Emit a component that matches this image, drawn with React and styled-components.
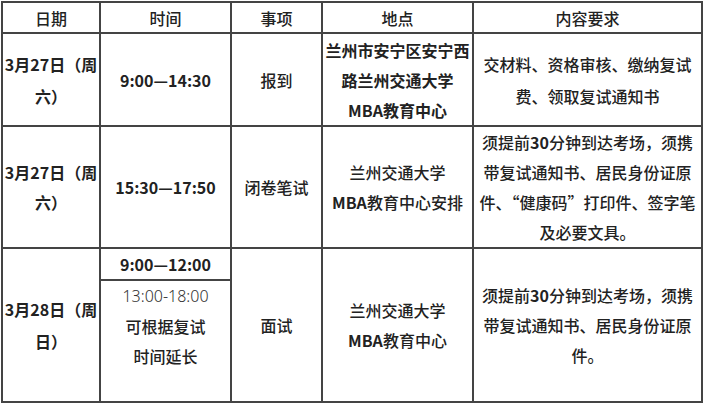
import React from "react";
import styled, { createGlobalStyle } from "styled-components";

const GlobalStyle = createGlobalStyle`
  html, body {
    margin: 0;
    padding: 0;
    background: #fff;
  }
  body {
    font-family: "Microsoft YaHei", "Noto Sans CJK SC", "Noto Sans", sans-serif;
    color: #222;
  }
`;

const Page = styled.div`
  padding: 1px 0 0 1px;
`;

const Table = styled.table`
  width: 700px;
  table-layout: fixed;
  border-collapse: collapse;
  font-size: 16px;
`;

const Row = styled.tr`
  height: ${(p) => p.$h}px;
`;

const Th = styled.th`
  border: 2px solid #444;
  padding: 0;
  font-weight: 500;
  text-align: center;
  vertical-align: middle;
  line-height: 20px;
`;

const Td = styled.td`
  border: 2px solid #444;
  padding: 0;
  text-align: center;
  vertical-align: ${(p) => (p.$top ? "top" : "middle")};
  font-weight: ${(p) => (p.$bold ? 700 : 500)};
  line-height: ${(p) => (p.$tall ? 32 : 30)}px;
  white-space: nowrap;
  overflow: hidden;
`;

const Light = styled.div`
  font-family: "Noto Sans", "Liberation Sans", sans-serif;
  font-weight: 300;
  color: #333;
  line-height: 30px;
`;

const Num = styled.span`
  font-weight: 700;
`;

const widths = [98, 131, 91, 151, 229];

export default function App() {
  return (
    <Page>
      <GlobalStyle />
      <Table>
        <colgroup>
          {widths.map((w, i) => (
            <col key={i} style={{ width: w }} />
          ))}
        </colgroup>
        <thead>
          <Row $h={31}>
            <Th>日期</Th>
            <Th>时间</Th>
            <Th>事项</Th>
            <Th>地点</Th>
            <Th>内容要求</Th>
          </Row>
        </thead>
        <tbody>
          <Row $h={93}>
            <Td $bold $tall>
              3月27日（周
              <br />
              六）
            </Td>
            <Td $bold>9:00—14:30</Td>
            <Td>报到</Td>
            <Td $bold>
              兰州市安宁区安宁西
              <br />
              路兰州交通大学
              <br />
              MBA教育中心
            </Td>
            <Td $tall>
              交材料、资格审核、缴纳复试
              <br />
              费、领取复试通知书
            </Td>
          </Row>
          <Row $h={122}>
            <Td $bold>
              3月27日（周
              <br />
              六）
            </Td>
            <Td $bold>15:30—17:50</Td>
            <Td>闭卷笔试</Td>
            <Td>
              兰州交通大学
              <br />
              <Num>MBA</Num>教育中心安排
            </Td>
            <Td>
              须提前<Num>30</Num>分钟到达考场，须携
              <br />
              带复试通知书、居民身份证原
              <br />
              件、“健康码”打印件、签字笔
              <br />
              及必要文具。
            </Td>
          </Row>
          <Row $h={30}>
            <Td $bold $tall rowSpan={2}>
              3月28日（周
              <br />
              日）
            </Td>
            <Td $bold>9:00—12:00</Td>
            <Td rowSpan={2}>面试</Td>
            <Td rowSpan={2}>
              兰州交通大学
              <br />
              <Num>MBA</Num>教育中心
            </Td>
            <Td rowSpan={2}>
              须提前<Num>30</Num>分钟到达考场，须携
              <br />
              带复试通知书、居民身份证原
              <br />
              件。
            </Td>
          </Row>
          <Row $h={122}>
            <Td $top>
              <Light>13:00-18:00</Light>
              可根据复试
              <br />
              时间延长
            </Td>
          </Row>
        </tbody>
      </Table>
    </Page>
  );
}
